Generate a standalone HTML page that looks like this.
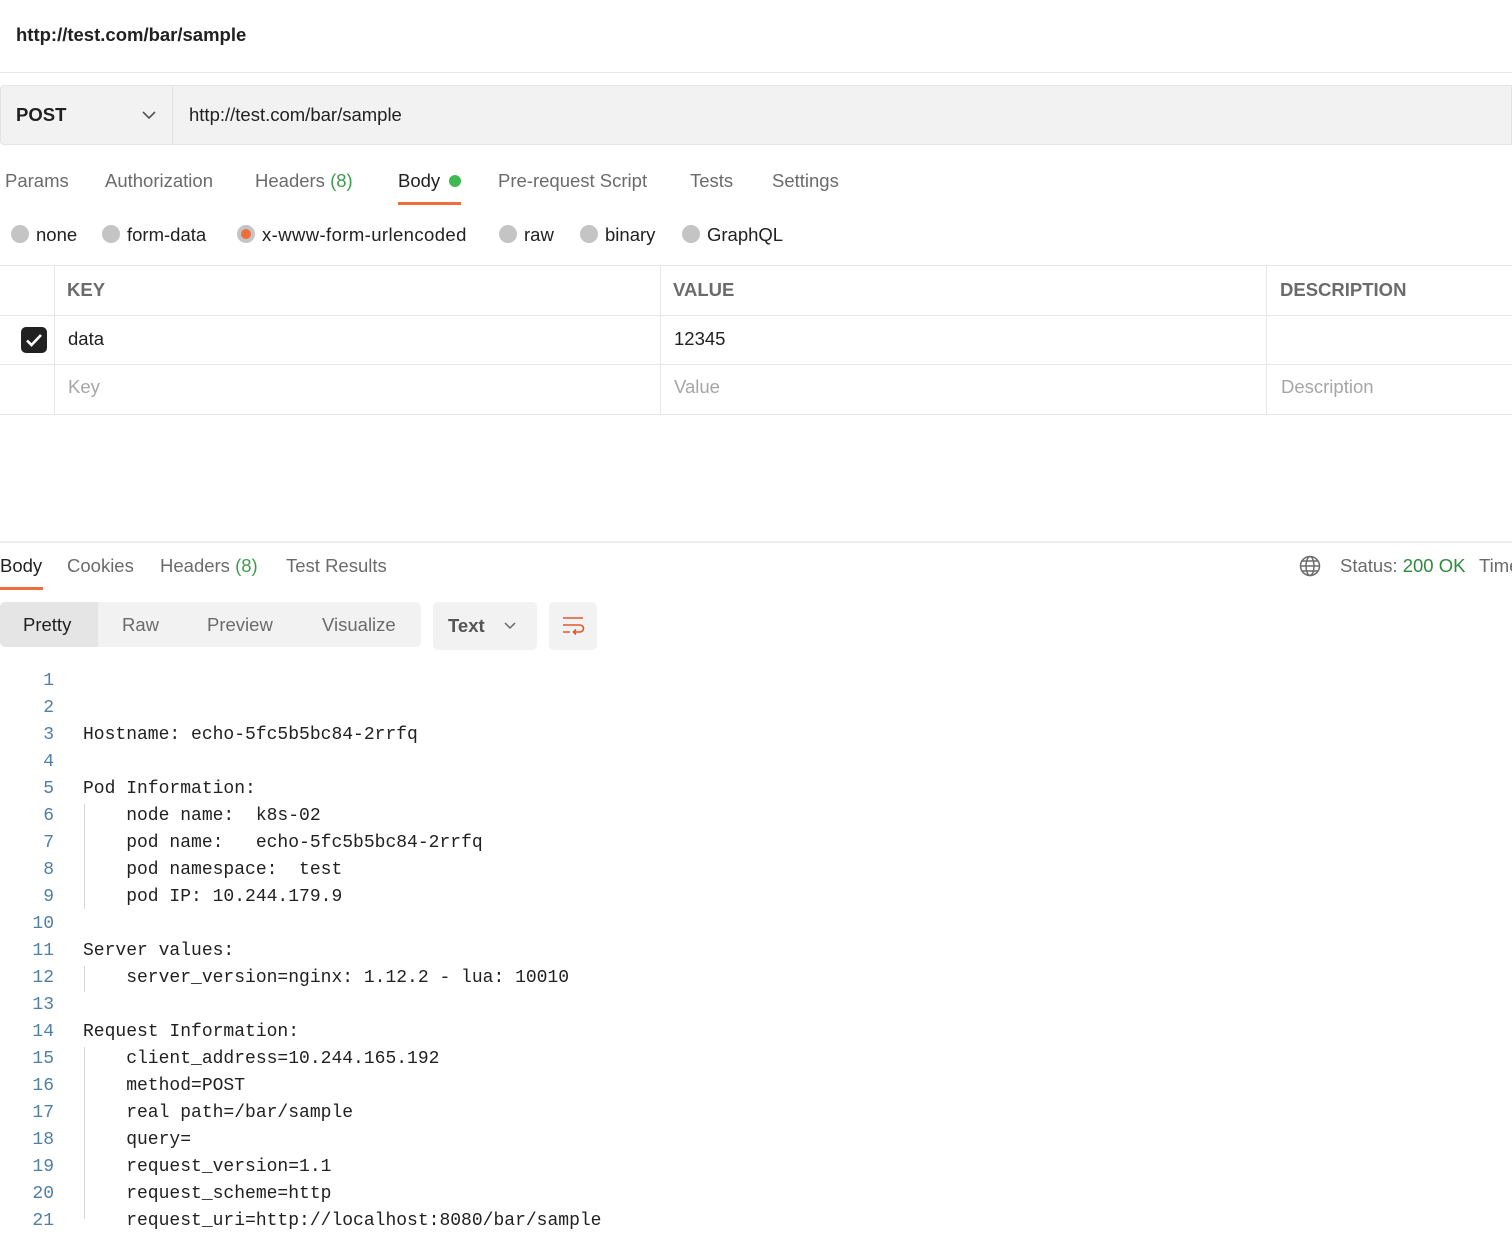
<!DOCTYPE html>
<html><head><meta charset="utf-8"><style>
*{margin:0;padding:0;box-sizing:border-box}
body{width:1512px;height:1217px;overflow:hidden;background:#fff;font-family:"Liberation Sans",Arial,sans-serif;color:#212121;position:relative}
.a{position:absolute;white-space:nowrap}
.t{font-size:18.5px;color:#6b6b6b;line-height:22px}
.g{color:#3f9b4f}
.rad{position:absolute;width:18px;height:18px;border-radius:50%;background:#c4c4c4}
.hl{position:absolute;left:0;right:0;height:1px;background:#e6e6e6}
.vl{position:absolute;width:1px;background:#e6e6e6}
.code{position:absolute;left:0;top:668px;font-family:"Liberation Mono",monospace;font-size:18px;line-height:27px;color:#212121}
.ln{position:absolute;left:0;width:54px;text-align:right;color:#4f7fa3}
.cx{position:absolute;left:83px;white-space:pre}
</style></head><body>
<div class="a" style="left:16px;top:23px;font-size:18.5px;font-weight:bold;color:#212121;line-height:24px">http://test.com/bar/sample</div>
<div class="hl" style="top:72px"></div>

<div class="a" style="left:0;top:85px;width:1512px;height:60px;background:#f2f2f2;border:1px solid #e4e4e4;border-radius:4px 0 0 4px"></div>
<div class="vl" style="left:172px;top:86px;height:58px;background:#e2e2e2"></div>
<div class="a" style="left:16px;top:104px;font-size:18.5px;font-weight:bold;line-height:22px">POST</div>
<svg class="a" style="left:141px;top:108px" width="16" height="14" viewBox="0 0 16 14"><path d="M2 4l6 6 6-6" fill="none" stroke="#555" stroke-width="1.6"/></svg>
<div class="a" style="left:189px;top:104px;font-size:18.5px;line-height:22px;color:#212121">http://test.com/bar/sample</div>

<div class="a t" style="left:5px;top:170px">Params</div>
<div class="a t" style="left:105px;top:170px">Authorization</div>
<div class="a t" style="left:255px;top:170px">Headers <span class="g">(8)</span></div>
<div class="a t" style="left:398px;top:170px;color:#212121">Body</div>
<div class="a" style="left:449px;top:175px;width:12px;height:12px;border-radius:50%;background:#3fb950"></div>
<div class="a" style="left:398px;top:202px;width:63px;height:3px;background:#f06d3a"></div>
<div class="a t" style="left:498px;top:170px">Pre-request Script</div>
<div class="a t" style="left:690px;top:170px">Tests</div>
<div class="a t" style="left:772px;top:170px">Settings</div>

<div class="rad" style="left:11px;top:225px"></div><div class="a t" style="left:36px;top:224px;color:#212121">none</div>
<div class="rad" style="left:102px;top:225px"></div><div class="a t" style="left:127px;top:224px;color:#212121">form-data</div>
<div class="rad" style="left:237px;top:225px"></div><div class="a" style="left:241px;top:229px;width:10px;height:10px;border-radius:50%;background:#f06d3a"></div><div class="a t" style="left:262px;top:224px;color:#212121;letter-spacing:0.4px">x-www-form-urlencoded</div>
<div class="rad" style="left:499px;top:225px"></div><div class="a t" style="left:524px;top:224px;color:#212121">raw</div>
<div class="rad" style="left:580px;top:225px"></div><div class="a t" style="left:605px;top:224px;color:#212121">binary</div>
<div class="rad" style="left:682px;top:225px"></div><div class="a t" style="left:707px;top:224px;color:#212121">GraphQL</div>

<div class="hl" style="top:265px"></div>
<div class="hl" style="top:315px"></div>
<div class="hl" style="top:364px"></div>
<div class="hl" style="top:414px"></div>
<div class="vl" style="left:54px;top:265px;height:149px"></div>
<div class="vl" style="left:660px;top:265px;height:149px"></div>
<div class="vl" style="left:1266px;top:265px;height:149px"></div>
<div class="a t" style="left:67px;top:279px;font-weight:bold;color:#6b6b6b">KEY</div>
<div class="a t" style="left:673px;top:279px;font-weight:bold;color:#6b6b6b">VALUE</div>
<div class="a t" style="left:1280px;top:279px;font-weight:bold;color:#6b6b6b">DESCRIPTION</div>
<div class="a" style="left:21px;top:327px;width:26px;height:26px;border-radius:5px;background:#212121"></div>
<svg class="a" style="left:21px;top:327px" width="26" height="26" viewBox="0 0 26 26"><path d="M6 13.5l4.5 4.5 9.5-10" fill="none" stroke="#fff" stroke-width="2.6"/></svg>
<div class="a t" style="left:68px;top:328px;color:#212121">data</div>
<div class="a t" style="left:674px;top:328px;color:#212121">12345</div>
<div class="a t" style="left:68px;top:376px;color:#a6a6a6">Key</div>
<div class="a t" style="left:674px;top:376px;color:#a6a6a6">Value</div>
<div class="a t" style="left:1281px;top:376px;color:#a6a6a6">Description</div>

<div class="hl" style="top:541px;height:2px;background:#ececec"></div>
<div class="a t" style="left:0;top:555px;color:#212121">Body</div>
<div class="a" style="left:0;top:587px;width:43px;height:3px;background:#f06d3a"></div>
<div class="a t" style="left:67px;top:555px">Cookies</div>
<div class="a t" style="left:160px;top:555px">Headers <span class="g">(8)</span></div>
<div class="a t" style="left:286px;top:555px">Test Results</div>
<svg class="a" style="left:1299px;top:555px" width="22" height="22" viewBox="0 0 22 22" fill="none" stroke="#6b6b6b" stroke-width="1.5"><circle cx="11" cy="11" r="9.5"/><ellipse cx="11" cy="11" rx="4" ry="9.5"/><path d="M1.5 11h19M3 6h16M3 16h16"/></svg>
<div class="a t" style="left:1340px;top:555px">Status: <span style="color:#2e8b3e">200 OK</span></div>
<div class="a t" style="left:1479px;top:555px">Time</div>

<div class="a" style="left:0;top:602px;width:421px;height:45px;background:#f2f2f2;border-radius:5px"></div>
<div class="a" style="left:0;top:602px;width:98px;height:45px;background:#e5e5e5;border-radius:5px 0 0 5px"></div>
<div class="a t" style="left:23px;top:614px;color:#212121">Pretty</div>
<div class="a t" style="left:122px;top:614px">Raw</div>
<div class="a t" style="left:207px;top:614px">Preview</div>
<div class="a t" style="left:322px;top:614px">Visualize</div>
<div class="a" style="left:433px;top:602px;width:104px;height:48px;background:#f2f2f2;border-radius:5px"></div>
<div class="a t" style="left:448px;top:615px;font-weight:bold;color:#555">Text</div>
<svg class="a" style="left:502px;top:619px" width="16" height="14" viewBox="0 0 16 14"><path d="M3 4l5 5 5-5" fill="none" stroke="#666" stroke-width="1.5"/></svg>
<div class="a" style="left:549px;top:602px;width:48px;height:48px;background:#f2f2f2;border-radius:5px"></div>
<svg class="a" style="left:561px;top:614px" width="24" height="24" viewBox="0 0 24 24" fill="none" stroke="#e0582a" stroke-width="1.6"><path d="M2 4h20M2 11h17a3.5 3.5 0 0 1 0 7h-6M15 15.5l-2.5 2.5 2.5 2.5M2 18h7"/></svg>

<div class="vl" style="left:84px;top:804px;height:105px;background:#d6d6d6"></div>
<div class="vl" style="left:84px;top:966px;height:26px;background:#d6d6d6"></div>
<div class="vl" style="left:84px;top:1047px;height:172px;background:#d6d6d6"></div>
<div class="code">
<div class="ln" style="top:0">1</div>
<div class="ln" style="top:27px">2</div>
<div class="ln" style="top:54px">3</div><div class="cx" style="top:54px">Hostname: echo-5fc5b5bc84-2rrfq</div>
<div class="ln" style="top:81px">4</div>
<div class="ln" style="top:108px">5</div><div class="cx" style="top:108px">Pod Information:</div>
<div class="ln" style="top:135px">6</div><div class="cx" style="top:135px">    node name:  k8s-02</div>
<div class="ln" style="top:162px">7</div><div class="cx" style="top:162px">    pod name:   echo-5fc5b5bc84-2rrfq</div>
<div class="ln" style="top:189px">8</div><div class="cx" style="top:189px">    pod namespace:  test</div>
<div class="ln" style="top:216px">9</div><div class="cx" style="top:216px">    pod IP: 10.244.179.9</div>
<div class="ln" style="top:243px">10</div>
<div class="ln" style="top:270px">11</div><div class="cx" style="top:270px">Server values:</div>
<div class="ln" style="top:297px">12</div><div class="cx" style="top:297px">    server_version=nginx: 1.12.2 - lua: 10010</div>
<div class="ln" style="top:324px">13</div>
<div class="ln" style="top:351px">14</div><div class="cx" style="top:351px">Request Information:</div>
<div class="ln" style="top:378px">15</div><div class="cx" style="top:378px">    client_address=10.244.165.192</div>
<div class="ln" style="top:405px">16</div><div class="cx" style="top:405px">    method=POST</div>
<div class="ln" style="top:432px">17</div><div class="cx" style="top:432px">    real path=/bar/sample</div>
<div class="ln" style="top:459px">18</div><div class="cx" style="top:459px">    query=</div>
<div class="ln" style="top:486px">19</div><div class="cx" style="top:486px">    request_version=1.1</div>
<div class="ln" style="top:513px">20</div><div class="cx" style="top:513px">    request_scheme=http</div>
<div class="ln" style="top:540px">21</div><div class="cx" style="top:540px">    request_uri=http://localhost:8080/bar/sample</div>
</div>
</body></html>
